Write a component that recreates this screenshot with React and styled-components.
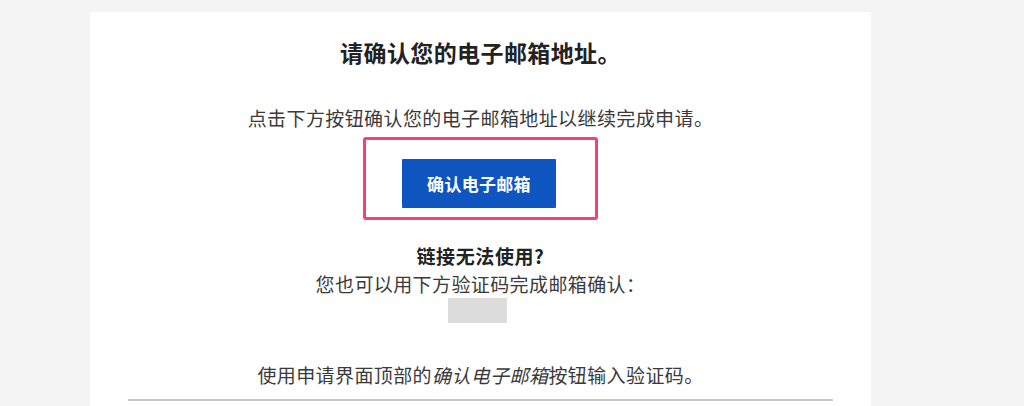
import React from 'react';
import styled, { createGlobalStyle } from 'styled-components';

const GlobalStyle = createGlobalStyle`
    html, body {
        margin: 0;
        padding: 0;
        background: #f4f4f4;
    }
    body {
        font-family: "Noto Sans CJK SC", "Noto Sans", sans-serif;
        color: #333;
    }
`;

const Page = styled.div`
    width: 1024px;
    height: 406px;
    overflow: hidden;
    padding-top: 12px;
    box-sizing: border-box;
`;

const Card = styled.section`
    margin-left: 90px;
    width: 781px;
    min-height: 394px;
    background: #fff;
    box-sizing: border-box;
    padding: 24px 38px 0;
    display: flex;
    flex-direction: column;
    align-items: center;
`;

const Title = styled.h1`
    margin: 0;
    font-size: 23px;
    line-height: 32px;
    font-weight: 700;
    letter-spacing: 0.4px;
    color: #222;
`;

const Text = styled.p`
    margin: ${(p) => p.$top || 0}px 0 0;
    font-size: 19px;
    line-height: 28px;
    letter-spacing: ${(p) => (p.$bold ? '0.6px' : '0.4px')};
    font-weight: ${(p) => (p.$bold ? 700 : 400)};
    color: ${(p) => (p.$bold ? '#222' : '#3a3a3a')};
    text-align: center;
`;

const Highlight = styled.div`
    margin-top: 5px;
    width: 235px;
    height: 83px;
    box-sizing: border-box;
    border: 3px solid #fb3f74;
    border-radius: 3px;
    padding: 19px 39px 9px 36px;
    display: flex;
`;

const ConfirmButton = styled.button`
    flex: 1;
    height: 49px;
    border: none;
    border-radius: 1px;
    background: #0f55bf;
    color: #fff;
    font-family: inherit;
    font-size: 17px;
    font-weight: 700;
    letter-spacing: 0.3px;
    cursor: pointer;
`;

const CodeBox = styled.div`
    width: 59px;
    height: 25px;
    margin: 0 6px 0 0;
    background: #dcdcdc;
`;

const Em = styled.em`
    font-style: italic;
`;

const Rule = styled.hr`
    align-self: stretch;
    margin: 10px 0 0;
    border: none;
    height: 2px;
    background: #c9c9c9;
`;

const App = () => {
    return (
        <Page>
            <GlobalStyle />
            <Card>
                <Title>请确认您的电子邮箱地址。</Title>
                <Text $top={36}>点击下方按钮确认您的电子邮箱地址以继续完成申请。</Text>
                <Highlight>
                    <ConfirmButton>确认电子邮箱</ConfirmButton>
                </Highlight>
                <Text $top={22} $bold>链接无法使用?</Text>
                <Text>您也可以用下方验证码完成邮箱确认：</Text>
                <CodeBox />
                <Text $top={38}>
                    使用申请界面顶部的<Em>确认电子邮箱</Em>按钮输入验证码。
                </Text>
                <Rule />
            </Card>
        </Page>
    );
};

export default App;
